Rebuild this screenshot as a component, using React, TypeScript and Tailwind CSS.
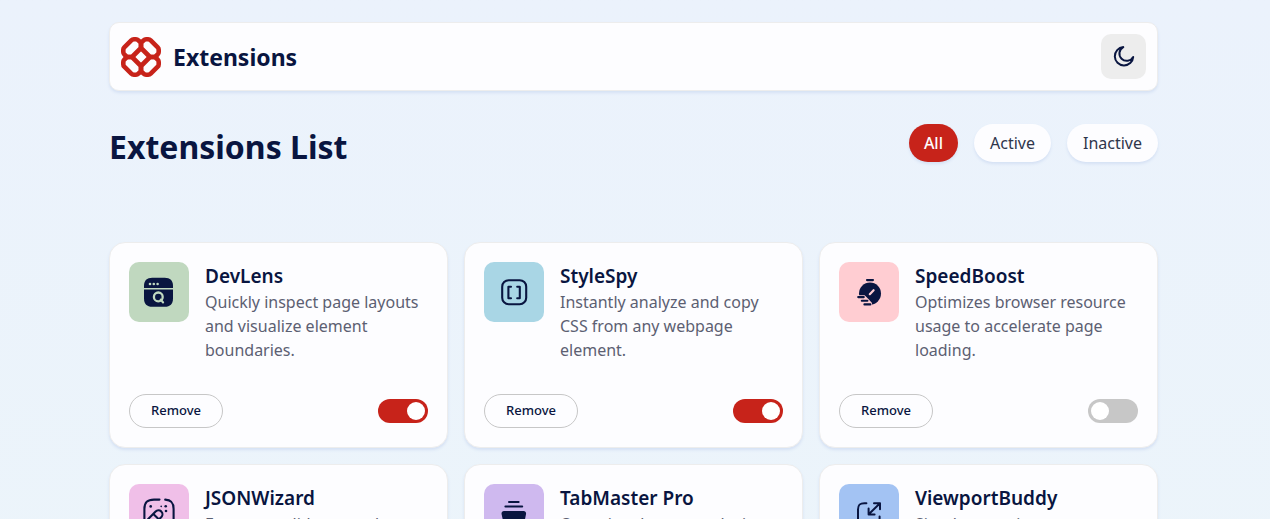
import { useState, type ReactNode } from "react";

type Extension = {
  name: string;
  description: string;
  tile: string;
  icon: ReactNode;
  active: boolean;
};

const NAVY = "#091540";

function Logo() {
  return (
    <svg viewBox="0 0 40 40" className="size-10" fill="none" stroke="#C7231A" strokeWidth="4.6" strokeLinejoin="round" aria-hidden="true">
      {[0, 90, 180, 270].map((angle) => (
        <path
          key={angle}
          transform={`rotate(${angle} 20 20)`}
          d="M3.3 10.3L10.3 3.3Q11.3 2.3 12.8 2.3H15Q16.4 2.3 17.4 3.3L19 4.9Q20 5.9 20 7.3V9.6Q20 11 19 12L12 19Q11 20 9.6 20H7.3Q5.9 20 4.9 19L3.3 17.4Q2.3 16.4 2.3 15V12.8Q2.3 11.3 3.3 10.3Z"
        />
      ))}
    </svg>
  );
}

function MoonIcon() {
  return (
    <svg viewBox="0 0.8 22 22" className="size-[22px]" fill="none" stroke={NAVY} strokeWidth="2" strokeLinecap="round" strokeLinejoin="round" aria-hidden="true">
      <path d="M10.3 1.9A9.2 9.2 0 1 0 20.2 11.7A7.3 7.3 0 1 1 10.3 1.9Z" />
    </svg>
  );
}

const devLens = (
  <>
    <path fill={NAVY} d="M15 26V24C15 18.5 17.8 15.7 23.3 15.7H35.7C41.2 15.7 44 18.5 44 24V26Z" />
    <path fill={NAVY} d="M15 27.6H44V36.4C44 41.9 41.2 44.7 35.7 44.7H23.3C17.8 44.7 15 41.9 15 36.4Z" />
    <g fill="#C0D8BF">
      <circle cx="21" cy="22" r="1.3" />
      <circle cx="24.8" cy="22" r="1.3" />
      <circle cx="28.6" cy="22" r="1.3" />
    </g>
    <g stroke="#C0D8BF" strokeWidth="2.3" strokeLinecap="round" fill="none">
      <circle cx="29.3" cy="34.9" r="4.4" />
      <path d="M31.8 37.6L34 40.4" />
    </g>
  </>
);

const styleSpy = (
  <g fill="none" stroke={NAVY} strokeWidth="2.1" strokeLinecap="round" strokeLinejoin="round">
    <rect x="18.2" y="18.2" width="24" height="24" rx="6.5" />
    <path d="M27 24.8H24.4V36.2H27" />
    <path d="M33.2 24.8H35.8V36.2H33.2" />
  </g>
);

const speedBoost = (
  <>
    <circle cx="31" cy="31.6" r="11" fill={NAVY} />
    <path fill="#FFCDD2" d="M17 33.2H25.6L29.4 37L33 41V45H17Z" />
    <g stroke={NAVY} strokeWidth="2.1" strokeLinecap="round">
      <path d="M28 18.1H34" />
      <path d="M19.2 35.1H24.8" />
      <path d="M22.8 38.8H28.4" />
      <path d="M25.4 42.4H31.4" />
    </g>
    <path d="M30.8 32.2L34.6 28.2" stroke="#FFCDD2" strokeWidth="2.2" strokeLinecap="round" />
  </>
);

const jsonWizard = (
  <>
    <g fill="none" stroke={NAVY} strokeWidth="2.1" strokeLinecap="round" strokeLinejoin="round">
      <path d="M30.5 15.6H25C18.2 15.6 15.4 18.4 15.4 25V35C15.4 41.8 18.2 44.6 25 44.6H35C41.8 44.6 44.6 41.8 44.6 35V25C44.6 18.8 42.4 15.9 36.2 15.6" />
      <path d="M16.8 37.6L26.6 27.6C28.1 26.1 30.6 26 32.2 27.4C33.8 28.9 33.9 31.4 32.4 33L22 43.2M24.6 30.2L29 34.4" />
    </g>
    <g fill={NAVY}>
      <circle cx="21.7" cy="22.4" r="1.3" />
      <circle cx="32.2" cy="22.4" r="0.8" />
      <circle cx="36.7" cy="22.2" r="1.3" />
      <circle cx="37" cy="27" r="1.3" />
    </g>
  </>
);

const tabMaster = (
  <>
    <g stroke={NAVY} strokeWidth="2" strokeLinecap="round">
      <path d="M25 18H34.6" />
      <path d="M21.4 22.6H38.2" />
    </g>
    <path fill={NAVY} d="M20 27H39.6C41.3 27 42.4 28.4 42 30.2L40.2 39.2C39.6 42 38.2 43 35.6 43H24.2C21.6 43 20.2 42 19.6 39.2L17.6 30.2C17.2 28.4 18.3 27 20 27Z" />
  </>
);

const viewportBuddy = (
  <g fill="none" stroke={NAVY} strokeWidth="2" strokeLinecap="round" strokeLinejoin="round">
    <path d="M27.4 19.2H25.4C20.6 19.2 19 20.8 19 25.6V34.4C19 39.2 20.6 40.8 25.4 40.8H34.2C39 40.8 40.6 39.2 40.6 34.4V32.6" />
    <path d="M30 30L41 19.2M35 19.2H41V25.2M29.6 24.6V30.6H35.6" />
  </g>
);

const initialExtensions: Extension[] = [
  { name: "DevLens", description: "Quickly inspect page layouts and visualize element boundaries.", tile: "bg-[#C0D8BF]", icon: devLens, active: true },
  { name: "StyleSpy", description: "Instantly analyze and copy CSS from any webpage element.", tile: "bg-[#A9D6E5]", icon: styleSpy, active: true },
  { name: "SpeedBoost", description: "Optimizes browser resource usage to accelerate page loading.", tile: "bg-[#FFCDD2]", icon: speedBoost, active: false },
  { name: "JSONWizard", description: "Formats, validates, and prettifies JSON responses in-browser.", tile: "bg-[#F0BFE8]", icon: jsonWizard, active: true },
  { name: "TabMaster Pro", description: "Organizes browser tabs into groups and sessions.", tile: "bg-[#CFB9EF]", icon: tabMaster, active: true },
  { name: "ViewportBuddy", description: "Simulates various screen resolutions directly within the browser.", tile: "bg-[#A3C3F3]", icon: viewportBuddy, active: false },
];

const filters = ["All", "Active", "Inactive"] as const;
type Filter = (typeof filters)[number];

function ExtensionCard({ item, onToggle, onRemove }: { item: Extension; onToggle: () => void; onRemove: () => void }) {
  return (
    <li className="flex flex-col justify-between gap-8 rounded-2xl border border-[#EDEDED] bg-[#FDFDFF] p-[19px] shadow-[0_2px_3px_#d5e1f4]">
      <div className="flex items-start gap-4">
        <svg viewBox="0 0 60 60" className={`size-15 shrink-0 rounded-[10px] ${item.tile}`} aria-hidden="true">
          {item.icon}
        </svg>
        <div>
          <h2 className="text-[19px] leading-7 font-semibold">{item.name}</h2>
          <p className="text-base text-[#5C6072]">{item.description}</p>
        </div>
      </div>
      <div className="flex items-center justify-between">
        <button type="button" onClick={onRemove} className="h-[34px] rounded-full border border-[#C7C7C7] px-[21px] text-[13px] font-medium">
          Remove
        </button>
        <label className="flex">
          <input type="checkbox" checked={item.active} onChange={onToggle} aria-label={`Enable ${item.name}`} className="peer sr-only" />
          <span className="flex h-6 w-[50px] rounded-full bg-[#C7C7C7] p-[3px] peer-checked:justify-end peer-checked:bg-[#C7231A]">
            <span className="size-[18px] rounded-full bg-white" />
          </span>
        </label>
      </div>
    </li>
  );
}

export default function App() {
  const [items, setItems] = useState(initialExtensions);
  const [filter, setFilter] = useState<Filter>("All");
  const visible = items.filter((item) => filter === "All" || item.active === (filter === "Active"));

  return (
    <div className="min-h-screen bg-linear-to-b from-[#EBF2FC] to-[#ECF5FA] pr-[3px] font-['Noto_Sans',sans-serif] text-[#091540]">
      <div className="mx-auto w-[83%] max-w-[1049px] pt-[22px] pb-16">
        <header className="flex items-center justify-between rounded-[10px] border border-[#EDEDED] bg-[#FDFDFF] p-[11px] shadow-[0_2px_3px_#d5e1f4]">
          <a href="#top" className="flex items-center gap-3">
            <Logo />
            <span className="text-[23px] leading-10 font-bold">Extensions</span>
          </a>
          <button type="button" aria-label="Switch to dark theme" className="grid size-[45px] place-items-center rounded-[10px] bg-[#EDEDED]">
            <MoonIcon />
          </button>
        </header>

        <main>
          <div className="mt-[33px] mb-[72px] flex flex-wrap items-start justify-between gap-4">
            <h1 className="text-[32px] leading-[46px] font-bold">Extensions List</h1>
            <div className="flex gap-4">
              {filters.map((name) => (
                <button
                  key={name}
                  type="button"
                  aria-pressed={filter === name}
                  onClick={() => setFilter(name)}
                  className={`h-[38px] rounded-full text-base shadow-[0_2px_3px_#d5e1f4] ${filter === name ? "bg-[#C7231A] px-[15px] font-medium text-[#FDFDFF]" : "bg-[#FDFDFF] px-4 text-[#2F364B]"}`}
                >
                  {name}
                </button>
              ))}
            </div>
          </div>

          <ul className="grid gap-4 md:grid-cols-2 lg:grid-cols-3">
            {visible.map((item) => (
              <ExtensionCard
                key={item.name}
                item={item}
                onToggle={() => setItems((all) => all.map((other) => (other.name === item.name ? { ...other, active: !other.active } : other)))}
                onRemove={() => setItems((all) => all.filter((other) => other.name !== item.name))}
              />
            ))}
          </ul>
        </main>
      </div>
    </div>
  );
}
